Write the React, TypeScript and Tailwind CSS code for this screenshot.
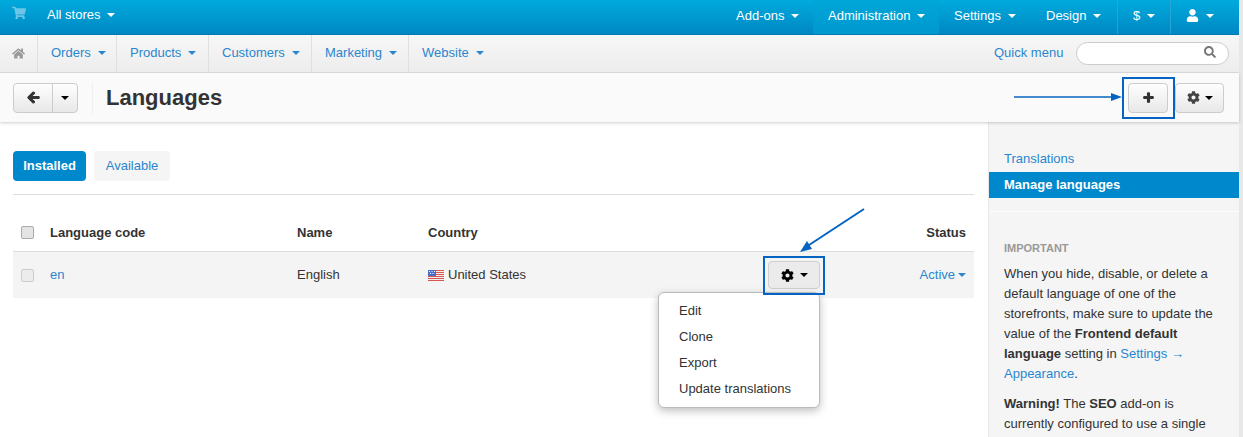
import { FaArrowLeft, FaCog, FaHome, FaPlus, FaSearch, FaShoppingCart, FaUser } from "react-icons/fa";

function Caret({ className }: { className: string }) {
  return <span className={`inline-block w-0 h-0 border-x-[4px] border-x-transparent border-t-[4px] ${className}`} />;
}

function TopItem({ label, width, active, divider }: { label: React.ReactNode; width: string; active?: boolean; divider?: boolean }) {
  return (
    <div className={`h-full flex items-center gap-[7px] pl-[15px] pb-[3px] ${width} ${active ? "bg-[#00a3d6]/60" : ""} ${divider ? "border-l border-[#27a4d4]" : ""}`}>
      {label}
      <Caret className="border-t-white" />
    </div>
  );
}

function NavItem({ label, width }: { label: string; width: string }) {
  return (
    <div className={`h-full flex items-center gap-[7px] pl-[13px] pb-[2px] border-r border-[#e0e0e0] text-[#2a86cf] ${width}`}>
      {label}
      <Caret className="border-t-[#2a86cf]" />
    </div>
  );
}

const btn = "h-[30px] flex items-center justify-center border border-[#cccccc] bg-gradient-to-b from-[#fefefe] to-[#e8e8e8]";

export default function App() {
  return (
    <div className="relative flex w-[1243px] h-[437px] overflow-hidden bg-white text-[13px] text-[#333] font-['Liberation_Sans',Arial,sans-serif]">
      <div className="w-[1239px] shrink-0">
        {/* Top bar */}
        <header className="h-[35px] flex justify-between bg-gradient-to-b from-[#00aadc] to-[#0088c4] border-b border-[#0079b0] text-white">
          <div className="flex items-center pl-3 pb-[5px]">
            <FaShoppingCart className="text-[14px] text-[#6cc5e6] -mt-[3px]" />
            <div className="flex items-center gap-[7px] ml-[21px] pt-[1px]">
              All stores
              <Caret className="border-t-white" />
            </div>
          </div>
          <nav className="flex items-center h-full">
            <TopItem label="Add-ons" width="w-[92px]" />
            <TopItem label="Administration" width="w-[126px]" active />
            <TopItem label="Settings" width="w-[92px]" />
            <TopItem label="Design" width="w-[86px]" />
            <TopItem label="$" width="w-[53px]" divider />
            <TopItem label={<FaUser className="text-[13px]" />} width="w-[69px]" divider />
          </nav>
        </header>

        {/* Second nav */}
        <div className="h-[38px] flex justify-between bg-gradient-to-b from-[#f7f7f7] to-[#ededed] border-b border-[#dddddd]">
          <nav className="flex items-center h-full">
            <div className="w-[38px] h-full flex items-center justify-center border-r border-[#e0e0e0] text-[#999]">
              <FaHome className="text-[13px]" />
            </div>
            <NavItem label="Orders" width="w-[79px]" />
            <NavItem label="Products" width="w-[92px]" />
            <NavItem label="Customers" width="w-[103px]" />
            <NavItem label="Marketing" width="w-[97px]" />
            <div className="h-full flex items-center gap-[7px] pl-[13px] pb-[2px] text-[#2a86cf]">
              Website
              <Caret className="border-t-[#2a86cf]" />
            </div>
          </nav>
          <div className="flex items-center pr-[10px]">
            <span className="text-[#2a86cf] mr-[11px] w-[71px] pb-[1px]">Quick menu</span>
            <div className="w-[153px] h-[23px] rounded-full border border-[#cccccc] bg-white flex items-center justify-end pr-[12px] pb-[3px] text-[#777]">
              <FaSearch className="text-[12px]" />
            </div>
          </div>
        </div>

        {/* Action bar */}
        <div className="h-[49px] flex items-center justify-between bg-[#fafafa] shadow-[0_1px_3px_rgba(0,0,0,0.2)] pl-[13px] pr-[15px] relative">
          <div className="flex items-center h-full">
            <div className="flex">
              <div className={`${btn} w-[40px] rounded-l-[4px] text-[#333]`}>
                <FaArrowLeft className="text-[13px] stroke-[40]" />
              </div>
              <div className={`${btn} w-[26px] -ml-px rounded-r-[4px]`}>
                <Caret className="border-t-black" />
              </div>
            </div>
            <div className="w-px h-[32px] bg-[#f0f0f0] ml-[14px] mr-[13px]" />
            <h1 className="text-[22px] leading-none font-bold text-[#333]">Languages</h1>
          </div>
          <div className="flex gap-[7px]">
            <div className={`${btn} w-[40px] rounded-[4px] text-[#333]`}>
              <FaPlus className="text-[11px] stroke-[50]" />
            </div>
            <div className={`${btn} w-[49px] gap-[5px] rounded-[4px] text-[#444]`}>
              <FaCog className="text-[13px]" />
              <Caret className="border-t-black" />
            </div>
          </div>
        </div>

        {/* Body */}
        <div className="flex h-[315px]">
          <main className="w-[989px] pl-[13px] pr-[14px] pt-[29px] border-r border-[#e8e8e8]">
            <div className="flex gap-2 pb-[13px] border-b border-[#dddddd]">
              <div className="h-[30px] w-[73px] flex items-center justify-center rounded-[4px] bg-[#0088cc] text-white font-bold">Installed</div>
              <div className="h-[30px] w-[76px] flex items-center justify-center rounded-[4px] bg-[#f5f5f5] text-[#2a86cf]">Available</div>
            </div>
            <div className="mt-[25px] h-[32px] flex items-center pb-[6px] font-bold text-[#333] border-b border-[#dddddd]">
              <div className="w-[37px] pl-2 flex"><span className="w-[13px] h-[13px] rounded-[2px] border border-[#aaa] bg-[#e4e4e4]" /></div>
              <div className="w-[247px]">Language code</div>
              <div className="w-[131px]">Name</div>
              <div className="flex-1">Country</div>
              <div className="pr-2">Status</div>
            </div>
            <div className="h-[46px] flex items-center bg-[#f4f4f4] text-[#333]">
              <div className="w-[37px] pl-2 flex"><span className="w-[13px] h-[13px] rounded-[2px] border border-[#ccc] bg-[#ececec]" /></div>
              <div className="w-[247px] text-[#2a86cf]">en</div>
              <div className="w-[131px]">English</div>
              <div className="w-[340px] flex items-center gap-[4px]">
                <svg width="16" height="11" viewBox="0 0 16 11">
                  <rect width="16" height="11" fill="#eeeeee" />
                  <path d="M0 .5h16M8 2.5h8M8 4.5h8M0 6.5h16M0 8.5h16M0 10.5h16" stroke="#d8564f" strokeWidth="1" />
                  <rect width="8" height="6" fill="#4a6fc9" />
                  <path d="M1 1.5h1M3.5 1.5h1M6 1.5h1M2 3.5h1M4.5 3.5h1" stroke="#ffffff" strokeWidth="1" />
                </svg>
                United States
              </div>
              <div className="w-[52px] h-[28px] flex items-center justify-center gap-[6px] rounded-[4px] border border-[#cfcfcf] bg-[#ebebeb] text-black">
                <FaCog className="text-[13px]" />
                <Caret className="border-t-black" />
              </div>
              <div className="flex-1 flex items-center justify-end gap-[3px] pr-2 text-[#2a86cf]">
                Active
                <Caret className="border-t-[#2a86cf]" />
              </div>
            </div>
          </main>
          <aside className="w-[250px] bg-[#f5f5f5] pt-[24px]">
            <div className="h-[26px] px-[15px] flex items-center text-[#2a86cf]">Translations</div>
            <div className="h-[26px] px-[15px] flex items-center bg-[#0088cc] text-white font-bold">Manage languages</div>
            <div className="mt-[13px] border-t border-[#fcfcfc]" />
            <div className="px-[15px] pt-[29px]">
              <div className="text-[11px] leading-[14px] font-bold text-[#999]">IMPORTANT</div>
              <p className="mt-[9px] leading-[20px]">
                When you hide, disable, or delete a default language of one of the storefronts, make sure to update the value of the <b>Frontend default language</b> setting in <span className="text-[#2a86cf]">Settings → Appearance</span>.
              </p>
              <p className="mt-[10px] leading-[20px]">
                <b>Warning!</b> The <b>SEO</b> add-on is currently configured to use a single
              </p>
            </div>
          </aside>
        </div>
      </div>
      <div className="flex-1 bg-[#e8e8e8]" />

      {/* Row menu */}
      <div className="absolute left-[658px] top-[292px] w-[162px] h-[116px] rounded-[6px] border border-[#bbbbbb] bg-white shadow-[0_3px_8px_rgba(0,0,0,0.25)] py-[5px] pl-5 text-[#333]">
        <div className="h-[26px] flex items-center">Edit</div>
        <div className="h-[26px] flex items-center">Clone</div>
        <div className="h-[26px] flex items-center">Export</div>
        <div className="h-[26px] flex items-center">Update translations</div>
      </div>

      {/* Annotations */}
      <div className="absolute left-[1122px] top-[77px] w-[53px] h-[42px] border-[2px] border-[#0563c1]" />
      <div className="absolute left-[763px] top-[256px] w-[62px] h-[39px] border-[2px] border-[#0563c1]" />
      <svg className="absolute left-0 top-0 pointer-events-none" width="1243" height="437">
        <line x1="1014" y1="97" x2="1112" y2="97" stroke="#0563c1" strokeWidth="1.5" />
        <polygon points="1122,97 1111,93 1111,101" fill="#0563c1" />
        <line x1="864" y1="209" x2="806" y2="247" stroke="#0563c1" strokeWidth="2" />
        <polygon points="800,252 807,241 812,249" fill="#0563c1" />
      </svg>
    </div>
  );
}
